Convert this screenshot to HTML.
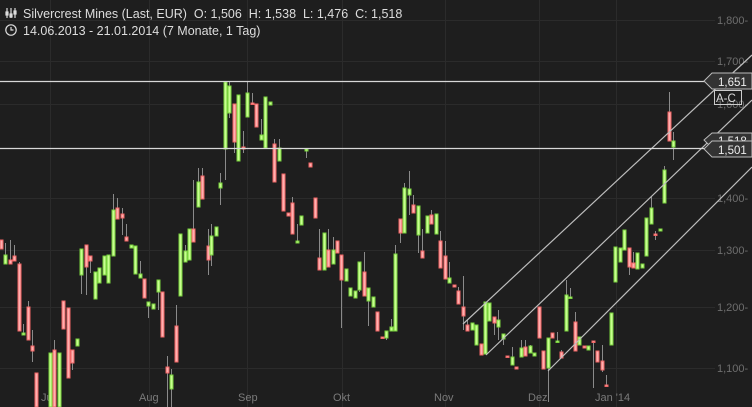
<!DOCTYPE html><html><head><meta charset="utf-8"><style>
html,body{margin:0;padding:0;background:#1e1e1e;width:752px;height:407px;overflow:hidden}
svg{display:block}
text{font-family:"Liberation Sans",sans-serif;white-space:pre}
</style></head><body>
<svg id="s" width="752" height="407" xmlns="http://www.w3.org/2000/svg">
<rect width="752" height="407" fill="#1e1e1e"/>
<g stroke="#2b2b2b" stroke-width="1">
<line x1="0" y1="20.5" x2="715" y2="20.5"/><line x1="0" y1="61.5" x2="715" y2="61.5"/><line x1="0" y1="104.5" x2="715" y2="104.5"/>
<line x1="0" y1="198.5" x2="715" y2="198.5"/><line x1="0" y1="250.5" x2="715" y2="250.5"/><line x1="0" y1="307.5" x2="715" y2="307.5"/><line x1="0" y1="368.5" x2="715" y2="368.5"/>
<line x1="50.5" y1="0" x2="50.5" y2="407"/><line x1="149.5" y1="0" x2="149.5" y2="407"/><line x1="247.5" y1="0" x2="247.5" y2="407"/><line x1="342.5" y1="0" x2="342.5" y2="407"/><line x1="445.5" y1="0" x2="445.5" y2="407"/><line x1="539.5" y1="0" x2="539.5" y2="407"/><line x1="616.5" y1="0" x2="616.5" y2="407"/>
</g>
<g fill="#6e6e6e" font-size="11">
<text x="717" y="24">1,800-</text><text x="717" y="65">1,700-</text><text x="717" y="108">1,600-</text><text x="717" y="202">1,400-</text><text x="717" y="254">1,300-</text><text x="717" y="311">1,200-</text><text x="717" y="372">1,100-</text>
</g>
<g fill="#7a7a7a" font-size="11">
<text x="41" y="401">Jul</text><text x="139" y="401">Aug</text><text x="238" y="401">Sep</text><text x="333" y="401">Okt</text><text x="434" y="401">Nov</text><text x="528" y="401">Dez</text><text x="595" y="401">Jan '14</text>
</g>
<g id="c"></g>
<g stroke="#bdbdbd" stroke-width="1.2" fill="none">
<line x1="463" y1="324" x2="752" y2="55"/>
<line x1="486" y1="355" x2="752" y2="100"/>
<line x1="548" y1="371" x2="752" y2="167"/>
</g>
<line x1="0" y1="81.5" x2="706" y2="81.5" stroke="#d8d8d8" stroke-width="1.2"/>
<line x1="0" y1="148.5" x2="706" y2="148.5" stroke="#d8d8d8" stroke-width="1.2"/>
<path d="M704,81 L712,73 L752,73 L752,89 L712,89 Z" stroke="#bbb" fill="#333"/>
<text x="718" y="86" fill="#eee" font-size="11.5">1,651</text>
<path d="M704,140 L712,133 L752,133 L752,148 L712,148 Z" stroke="#bbb" fill="#333"/>
<text x="718" y="145" fill="#eee" font-size="11.5">1,518</text>
<path d="M704,149 L712,141 L752,141 L752,157 L712,157 Z" stroke="#bbb" fill="#333"/>
<text x="718" y="154" fill="#eee" font-size="11.5">1,501</text>
<rect x="714.5" y="90.5" width="27" height="14" fill="none" stroke="#ccc"/>
<text x="716" y="102" fill="#ddd" font-size="11.5">A-C</text>
<g fill="#ddd" font-size="12.5">
<text x="23" y="18">Silvercrest Mines (Last, EUR)  O: 1,506  H: 1,538  L: 1,476  C: 1,518</text>
<text x="23" y="35">14.06.2013 - 21.01.2014 (7 Monate, 1 Tag)</text>
</g>
<g stroke="#ddd" stroke-width="1.2" fill="none">
<line x1="7" y1="8" x2="7" y2="18"/><line x1="11" y1="8" x2="11" y2="18"/><line x1="15" y1="8" x2="15" y2="18"/>
<rect x="6" y="12" width="2" height="3" fill="#ddd"/><rect x="10" y="14" width="2" height="3" fill="#ddd"/><rect x="14" y="11" width="2" height="3" fill="#ddd"/>
<circle cx="11" cy="30" r="5.2"/><path d="M11,27 V30 H13.5"/>
</g>
</svg>
<script>
var d=[
[1,240,249,240,249,'r'],[5,255,264,243,264,'g'],[10,260,264,240,264,'r'],[14,256,261,245,261,'r'],[19,264,331,262,331,'r'],[23,333,335,324,335,'g'],[28,307,340,301,340,'r'],[32,346,351,330,362,'r'],[36,373,407,373,407,'r'],
[50,353,407,353,407,'g'],[54,350,407,340,407,'r'],[59,353,407,353,407,'g'],[63,301,329,301,329,'r'],[68,308,378,308,378,'r'],[72,350,363,350,370,'r'],[77,339,346,339,346,'g'],[81,249,275,249,294,'g'],[86,245,267,245,295,'r'],[90,256,261,256,273,'r'],[95,272,299,272,299,'g'],[99,268,283,268,283,'g'],[104,256,275,256,275,'g'],[108,255,283,255,283,'g'],[113,210,256,194,256,'g'],[117,208,219,198,219,'r'],[122,214,218,208,235,'r'],[126,237,241,224,241,'r'],[131,245,248,245,248,'g'],[135,246,274,246,274,'g'],[140,274,278,261,278,'g'],[144,279,298,279,298,'r'],[148,302,306,302,318,'g'],[153,304,309,304,309,'g'],[158,280,292,280,310,'g'],[162,292,337,292,337,'r'],[167,367,373,356,407,'r'],[171,375,389,369,407,'g'],[176,326,362,305,362,'r'],
[180,234,296,234,296,'g'],[185,251,262,245,262,'g'],[189,229,260,229,260,'g'],[193,229,242,180,242,'r'],[198,182,207,168,207,'g'],[202,176,199,168,199,'r'],[208,246,260,229,275,'r'],[211,236,255,224,266,'g'],[216,227,236,227,236,'g'],[220,183,188,173,205,'g'],[225,82,149,82,180,'g'],[229,86,113,82,118,'g'],[234,104,142,104,153,'r'],[238,95,161,95,161,'g'],[243,147,149,131,153,'r'],[247,93,117,82,117,'g'],[252,103,104,93,104,'r'],[256,104,127,104,127,'r'],[261,135,140,119,140,'g'],[265,97,148,97,148,'g'],[270,102,105,102,105,'g'],[274,144,182,139,182,'r'],[279,148,161,139,161,'g'],[283,174,211,174,211,'r'],[288,213,216,213,216,'r'],[292,203,234,197,234,'r'],[297,241,243,224,243,'g'],[301,216,225,216,225,'g'],[306,149,151,149,158,'g'],[310,163,167,163,167,'r'],[315,198,218,198,218,'r'],[319,258,270,229,270,'r'],[324,233,270,233,270,'g'],[328,250,267,229,267,'r'],[333,250,264,237,264,'g'],[337,241,253,241,253,'r'],[341,255,280,255,328,'r'],[346,269,281,269,281,'g'],[350,288,296,288,296,'g'],[355,291,298,291,298,'g'],[359,262,290,262,292,'g'],[364,272,296,252,296,'r'],[368,288,301,288,326,'g'],[373,297,307,297,307,'g'],[377,312,331,312,331,'r'],[382,337,338,337,338,'r'],[386,331,338,331,340,'g'],[391,327,331,319,331,'g'],[395,254,331,245,331,'g'],[400,219,233,219,243,'r'],[404,188,233,183,233,'g'],[409,189,195,171,215,'g'],[413,205,213,195,213,'r'],[418,206,235,206,253,'g'],[422,251,258,229,258,'r'],[427,216,233,216,233,'g'],[431,215,224,210,224,'r'],[436,214,234,214,234,'g'],[440,241,268,231,268,'r'],[445,256,279,241,279,'r'],[449,278,283,262,283,'g'],[454,285,287,285,287,'r'],[458,291,304,287,304,'r'],[463,307,316,276,330,'r'],[467,325,331,320,331,'r'],[472,323,330,323,330,'g'],[476,325,345,325,345,'g'],[481,344,355,344,355,'r'],[485,302,354,302,354,'g'],[489,303,321,303,321,'g'],[494,317,323,317,335,'r'],[498,320,327,310,340,'g'],[503,334,339,334,345,'g'],[507,356,357,356,357,'r'],[512,357,365,347,365,'g'],[516,367,369,367,369,'r'],[521,348,357,340,357,'g'],[525,347,356,340,356,'r'],[530,346,353,345,353,'g'],[534,353,356,353,356,'g'],[539,307,338,307,338,'r'],[543,351,369,351,369,'r'],[548,338,368,338,402,'g'],[552,333,338,333,338,'r'],[557,341,342,332,342,'g'],[561,352,358,350,358,'r'],[566,295,331,280,331,'g'],[570,297,298,288,298,'g'],[575,322,351,312,351,'r'],[579,337,345,337,345,'g'],[584,346,348,346,348,'r'],[588,346,350,346,350,'g'],[593,341,342,341,388,'r'],[597,351,362,351,362,'r'],[602,361,370,345,372,'r'],[606,385,386,375,386,'r'],[611,313,345,313,345,'g'],[615,247,282,247,282,'g'],[620,248,262,248,262,'g'],[624,230,250,230,250,'g'],[629,248,267,248,275,'r'],[633,263,268,252,268,'r'],[637,253,269,253,269,'g'],[642,264,268,264,268,'g'],[646,218,256,218,256,'g'],[651,208,224,197,224,'g'],[655,234,235,231,240,'r'],[660,229,231,229,231,'g'],[664,170,203,166,203,'g'],[669,112,141,92,141,'r'],[673,141,147,132,160,'g']];
var s='';
d.forEach(function(c){var x=c[0];
s+='<line x1="'+(x+0.5)+'" y1="'+c[3]+'" x2="'+(x+0.5)+'" y2="'+c[4]+'" stroke="#8a8a8a" stroke-width="1"/>';
var h=Math.max(c[2]-c[1],1.5);
s+=c[5]=='g'?'<rect x="'+(x-1)+'" y="'+c[1]+'" width="3" height="'+h+'" fill="#c8ff90" stroke="#78d23c" stroke-width="1"/>':'<rect x="'+(x-1)+'" y="'+c[1]+'" width="3" height="'+h+'" fill="#ffb0b0" stroke="#f06464" stroke-width="1"/>';});
document.getElementById('c').innerHTML=s;
</script>
</body></html>
